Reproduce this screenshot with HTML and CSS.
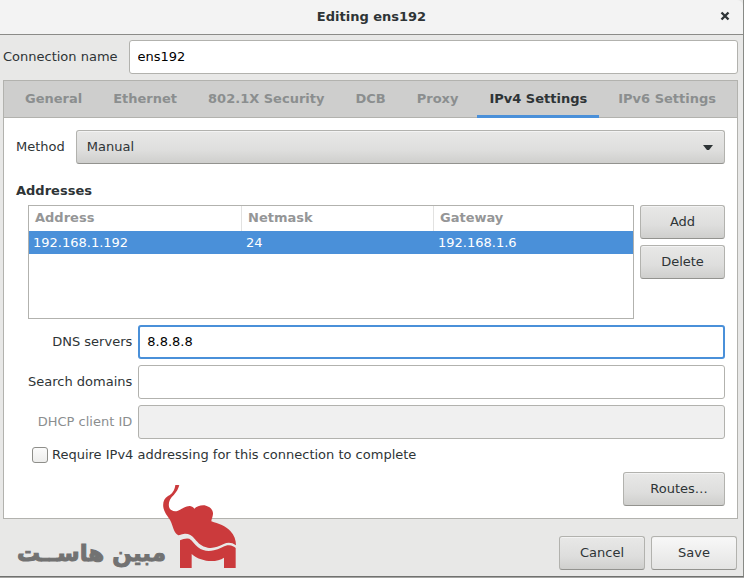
FILE: index.html
```html
<!DOCTYPE html>
<html lang="en">
<head>
<meta charset="utf-8">
<title>Editing ens192</title>
<link rel="stylesheet" href="styles.css">
</head>
<body>
<main class="window">
  <header class="titlebar">
    <h1>Editing ens192</h1>
    <button class="close" type="button" aria-label="Close">
      <svg width="10" height="10" viewBox="0 0 10 10"><path d="M1.5 1.5 8.5 8.5M8.5 1.5 1.5 8.5" fill="none" stroke="#2e3436" stroke-width="2.4"/></svg>
    </button>
  </header>
  <form class="content">
    <div class="name-row">
      <label for="name">Connection name</label>
      <input class="field" id="name" type="text" value="ens192">
    </div>
    <section class="notebook">
      <nav class="tabs">
        <button class="tab" type="button">General</button>
        <button class="tab" type="button">Ethernet</button>
        <button class="tab" type="button">802.1X Security</button>
        <button class="tab" type="button">DCB</button>
        <button class="tab" type="button">Proxy</button>
        <button class="tab active" type="button">IPv4 Settings</button>
        <button class="tab" type="button">IPv6 Settings</button>
      </nav>
      <div class="page">
        <div class="method-row">
          <label for="method">Method</label>
          <div class="combo">
            <select id="method"><option>Manual</option></select>
            <svg class="arrow" width="10" height="5" viewBox="0 0 10 5"><path d="M0 0H10L6 5H4Z" fill="#2e3436"/></svg>
          </div>
        </div>
        <h2>Addresses</h2>
        <div class="addresses">
          <div class="tree">
            <table>
              <colgroup><col class="c1"><col class="c2"><col></colgroup>
              <thead><tr><th>Address</th><th>Netmask</th><th>Gateway</th></tr></thead>
              <tbody><tr><td>192.168.1.192</td><td>24</td><td>192.168.1.6</td></tr></tbody>
            </table>
          </div>
          <div class="tree-actions">
            <button class="btn" type="button">Add</button>
            <button class="btn" type="button">Delete</button>
          </div>
        </div>
        <div class="fields">
          <label for="dns">DNS servers</label>
          <input class="field focused" id="dns" type="text" value="8.8.8.8">
          <label for="search">Search domains</label>
          <input class="field" id="search" type="text">
          <label class="dim" for="dhcp">DHCP client ID</label>
          <input class="field" id="dhcp" type="text" disabled>
        </div>
        <div class="check-row">
          <input id="require" type="checkbox">
          <label for="require">Require IPv4 addressing for this connection to complete</label>
        </div>
        <div class="routes-row">
          <button class="btn routes" type="button">Routes…</button>
        </div>
      </div>
    </section>
    <footer>
      <div class="brand" lang="fa" dir="rtl">مبین هاســت</div>
      <svg class="elephant" width="73" height="83" viewBox="39 15 219 249">
        <g fill="#cb3a3c">
          <path d="M76 15Q82 13 88 16C84 27 82 33 72 44C58 56 55 68 57 80C60 92 72 96 84 92C95 88 106 77 120 78C127 79 130 83 133 86C140 79 155 74 168 77C180 80 190 90 189 102C188 112 184 118 184 124C205 131 228 138 241 153C253 166 258 180 258 196C245 186 232 187 221 192C205 200 190 206 173 203C155 200 145 190 135 178C125 165 113 160 101 162C92 163 87 167 84 165C74 160 70 145 64 128C58 112 44 103 40 82C38 66 42 56 54 48C66 42 74 32 76 15Z"/>
          <path d="M90 181Q103 174 118 176C128 182 133 193 144 202C158 213 175 215 192 211C208 208 220 199 232 196C243 194 252 199 257 204V264H222V233C200 248 155 248 125 222V264H90Z"/>
        </g>
      </svg>
      <button class="btn action" type="button">Cancel</button>
      <button class="btn action light" type="button">Save</button>
    </footer>
  </form>
</main>
</body>
</html>
```
FILE: styles.css
```css
* { box-sizing: border-box; }
body {
  margin: 0;
  background: #a5a5a3;
  color: #2e3436;
  font: 13px/16px "DejaVu Sans", sans-serif;
}
button, input, select { font: inherit; color: inherit; margin: 0; }
button { padding: 0; border: 0; background: none; }
.window {
  background: #e8e8e7;
  border-right: 1px solid #888a86;
  border-bottom: 1px solid #70716f;
}
.titlebar {
  position: relative;
  display: flex;
  align-items: center;
  justify-content: center;
  height: 35px;
  background: #f3f3f3;
  border-bottom: 1px solid #8b8b88;
  border-top-right-radius: 6px;
}
h1, h2 { margin: 0; font-size: 13px; line-height: 16px; }
.close { position: absolute; right: 13px; top: 11px; width: 10px; height: 10px; }
.close svg { display: block; }
.content { padding: 5px 5px 6px 3px; }
.name-row { display: flex; align-items: center; gap: 11px; }
.field {
  flex: 1;
  min-width: 0;
  height: 34px;
  padding: 0 8px 2px;
  background: #fff;
  color: #000;
  border: 1px solid #b2b2ae;
  border-radius: 3px;
  outline: 0;
}
.field:disabled { background: #f0f0f0; }
.field.focused { border: 2px solid #4a90d9; padding: 0 7px 2px; }
.notebook { margin-top: 6px; border: 1px solid #b2b2ae; }
.tabs {
  display: flex;
  gap: 7px;
  height: 37px;
  padding-left: 9px;
  background: #cececd;
  border-bottom: 1px solid #b2b2ae;
}
.tab {
  height: 37px;
  padding: 2px 12px 0;
  border-bottom: 3px solid transparent;
  color: #8b8e8f;
  font-weight: bold;
  white-space: nowrap;
}
.tab.active { color: #2e3436; border-color: #4a90d9; }
.page { padding: 12px; background: #fff; }
.method-row { display: flex; align-items: center; gap: 11px; }
.combo { position: relative; flex: 1; }
.combo select, .btn {
  height: 34px;
  border: 1px solid #b2b2ae;
  border-bottom-color: #93938f;
  border-radius: 3px;
  background: linear-gradient(#e8e8e7, #dededd 60%, #cfcfcd);
  box-shadow: inset 0 1px #f3f3f3;
}
.combo select { display: block; width: 100%; padding: 0 10px; appearance: none; }
.arrow { position: absolute; right: 12px; top: 15px; pointer-events: none; }
h2 { margin: 19px 0 6px; }
.addresses { display: flex; gap: 6px; margin-left: 12px; }
.tree { flex: 1; height: 114px; border: 1px solid #b2b2ae; }
table { width: 100%; border-collapse: separate; border-spacing: 0; table-layout: fixed; }
.c1 { width: 213px; }
.c2 { width: 192px; }
th {
  height: 25px;
  padding: 0 6px 2px;
  text-align: left;
  color: #959697;
  border-right: 1px solid #e2e2e1;
}
th:last-child { border-right: 0; }
td { height: 23px; padding: 0 4px; background: #4a90d9; color: #fff; }
.tree-actions { display: flex; flex-direction: column; gap: 6px; width: 85px; }
.fields {
  display: grid;
  grid-template-columns: auto 1fr;
  align-items: center;
  gap: 6px;
  margin: 6px 0 0 12px;
}
.fields label { text-align: right; }
.dim { color: #8b8e8f; }
.check-row { display: flex; align-items: center; gap: 4px; margin: 8px 0 0 16px; }
.check-row input {
  width: 16px;
  height: 16px;
  appearance: none;
  border: 1px solid #8e8e8a;
  border-radius: 3px;
  background: linear-gradient(#fbfbfb, #ededec);
}
.routes-row { display: flex; justify-content: flex-end; margin-top: 9px; }
.routes { width: 102px; padding-left: 10px; }
footer {
  position: relative;
  display: flex;
  align-items: center;
  gap: 6px;
  padding: 17px 1px 0 0;
}
.brand {
  margin: 0 auto 0 14px;
  color: #727272;
  font-size: 23px;
  line-height: 34px;
  font-weight: bold;
  -webkit-text-stroke: 1px #727272;
}
.elephant { position: absolute; left: 160px; bottom: 2px; }
.action { width: 86px; }
.light { background: linear-gradient(#f8f8f8, #e4e4e3); }
```
